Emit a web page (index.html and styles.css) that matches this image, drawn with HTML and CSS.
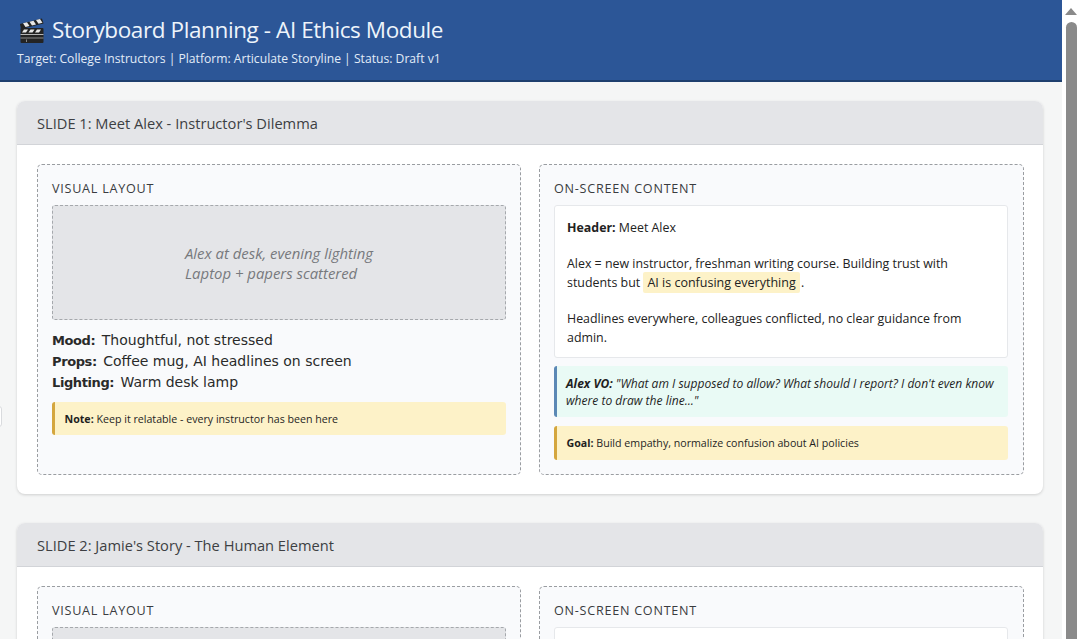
FILE: index.html
```html
<!DOCTYPE html>
<html lang="en">
<head>
<meta charset="utf-8">
<title>Storyboard Planning - AI Ethics Module</title>
<link rel="stylesheet" href="styles.css">
</head>
<body>
<div class="app">
  <main class="page">
    <header class="top">
      <h1 class="title">
        <svg class="clap" viewBox="0 0 26 26" aria-hidden="true">
          <path d="M1 7 23 1.500 24.500 6.500 2 12Z" fill="#222"/>
          <path d="M4 6.300 8 5.300 10.500 9 6.500 10ZM10.500 4.700 14.500 3.700 17 7.400 13 8.400ZM17 3 21 2 23.500 5.800 19.500 6.800Z" fill="#e8e8e8"/>
          <rect x="1.500" y="11" width="23" height="15" rx="1" fill="#242424"/>
          <path d="M5 12.500h4l-2 3H3ZM11.500 12.500h4l-2 3h-4ZM18 12.500h4l-2 3h-4Z" fill="#e8e8e8"/>
          <rect x="1.500" y="17" width="23" height="1" fill="#b5b5b5"/>
          <rect x="1.500" y="20.500" width="23" height="1" fill="#8a8a8a"/>
          <rect x="7" y="22.500" width="1" height="2.500" fill="#8a8a8a"/>
        </svg>
        <span>Storyboard Planning - AI Ethics Module</span>
      </h1>
      <p class="meta">Target: College Instructors | Platform: Articulate Storyline | Status: Draft v1</p>
    </header>
    <div class="side-tab"></div>
    <section class="slides">
      <article class="card">
        <h2 class="card-head">SLIDE 1: Meet Alex - Instructor's Dilemma</h2>
        <div class="card-body">
          <div class="panel">
            <h3 class="panel-title">VISUAL LAYOUT</h3>
            <div class="placeholder"><span>Alex at desk, evening lighting<br>Laptop + papers scattered</span></div>
            <p class="sketch"><b>Mood:</b> Thoughtful, not stressed<br><b>Props:</b> Coffee mug, AI headlines on screen<br><b>Lighting:</b> Warm desk lamp</p>
            <div class="note"><b>Note:</b> Keep it relatable - every instructor has been here</div>
          </div>
          <div class="panel">
            <h3 class="panel-title">ON-SCREEN CONTENT</h3>
            <div class="copy">
              <p><b>Header:</b> Meet Alex</p>
              <p>Alex = new instructor, freshman writing course. Building trust with students but <mark>AI is confusing everything</mark> .</p>
              <p>Headlines everywhere, colleagues conflicted, no clear guidance from admin.</p>
            </div>
            <div class="vo"><b>Alex VO:</b> "What am I supposed to allow? What should I report? I don't even know where to draw the line..."</div>
            <div class="note goal"><b>Goal:</b> Build empathy, normalize confusion about AI policies</div>
          </div>
        </div>
      </article>
      <article class="card">
        <h2 class="card-head">SLIDE 2: Jamie's Story - The Human Element</h2>
        <div class="card-body">
          <div class="panel">
            <h3 class="panel-title">VISUAL LAYOUT</h3>
            <div class="placeholder"></div>
          </div>
          <div class="panel">
            <h3 class="panel-title">ON-SCREEN CONTENT</h3>
            <div class="copy"></div>
          </div>
        </div>
      </article>
    </section>
  </main>
  <aside class="scrollbar">
    <div class="arrow"></div>
    <div class="thumb"></div>
  </aside>
</div>
</body>
</html>
```
FILE: styles.css
```css
* { box-sizing: border-box; }
html, body { margin: 0; height: 100%; overflow: hidden; }
body { font-family: "Open Sans", "Noto Sans", sans-serif; color: #222; background: #f5f6f6; }
.app { display: flex; height: 639px; }
.page { position: relative; width: 1062px; height: 639px; overflow: hidden; background: #f5f6f6; }
.top { height: 82px; background: #2c5697; border-bottom: 2px solid #1e3f6e; color: #eef4fb; padding: 15px 17px 0; }
.title { display: flex; align-items: center; gap: 7px; margin: 0; font-size: 22.500px; line-height: 30px; font-weight: 400; letter-spacing: -.4px; }
.clap { width: 26px; height: 26px; margin-left: 2px; flex: none; }
.meta { margin: 5px 0 0; font-size: 12.150px; line-height: 17px; color: #e2ecf8; }
.side-tab { position: absolute; left: -6px; top: 406px; width: 8px; height: 21px; background: #fff; border: 1px solid #d9dbde; border-radius: 3px; }
.slides { display: flex; flex-direction: column; gap: 29px; padding: 19px 19px 0 17px; }
.card { flex: none; background: #fff; border-radius: 8px; box-shadow: 0 1px 3px rgba(0,0,0,.16); overflow: hidden; }
.card-head { margin: 0; height: 44px; padding: 0 20px; display: flex; align-items: center; background: #e4e5e8; border-bottom: 1px solid #d2d4d8; font-size: 14.650px; font-weight: 500; color: #3d3f43; }
.card-body { display: grid; grid-template-columns: 484px 485px; gap: 18px; padding: 19px 19px 19px 20px; }
.panel { background: #f9fafc; border: 1px dashed #9a9da1; border-radius: 5px; padding: 15px 14px 14px; min-height: 311px; }
.panel + .panel { padding-right: 15px; }
.panel-title { margin: 0 0 8px; font-size: 12.600px; line-height: 17px; font-weight: 500; letter-spacing: .75px; color: #3a3c40; }
.placeholder { height: 115px; display: flex; align-items: center; justify-content: center; background: #e4e5e8; border: 1px dashed #a5a8ac; border-radius: 3px; font-size: 14.900px; line-height: 20px; font-style: italic; color: #77797d; }
.sketch { margin: 10px 0 9px; font-family: "DejaVu Sans", sans-serif; font-size: 14px; line-height: 21px; color: #2a2a2a; }
.sketch b { font-size: 13px; letter-spacing: -.4px; margin-right: 2px; }
.note { min-height: 33px; padding: 9px 10px 7px 9.500px; display: block; background: #fdf2c8; border-left: 3px solid #d4a63e; border-radius: 3px; font-size: 10.650px; line-height: 17px; color: #1f1f1f; }
.goal { min-height: 34px; }
.copy { height: 153px; background: #fff; border: 1px solid #e6e8eb; border-radius: 3px; padding: 12px 20px 12px 12px; font-size: 12.400px; line-height: 19px; color: #222; }
.copy p { margin: 0 0 17px; }
.copy p:last-child { margin-bottom: 0; }
mark { background: #fdf2c8; color: inherit; padding: 2px 4px; margin-right: -2px; border-radius: 2px; font-size: 12.500px; }
.vo { margin: 8px 0 9px; height: 51px; padding: 9px 6px 8px 9px; background: #e9faf5; border-left: 3px solid #5b88b5; border-radius: 3px; font-size: 12.050px; line-height: 17px; font-style: italic; color: #1f1f1f; }
.scrollbar { width: 16px; height: 639px; background: #fff; position: relative; }
.arrow { position: absolute; left: 3px; top: 8px; width: 0; height: 0; border-left: 6px solid transparent; border-right: 6px solid transparent; border-bottom: 7px solid #8a8a8a; }
.thumb { position: absolute; left: 4px; top: 22px; width: 11px; bottom: -10px; background: #8a8a8a; border-radius: 6px 6px 0 0; }
```
